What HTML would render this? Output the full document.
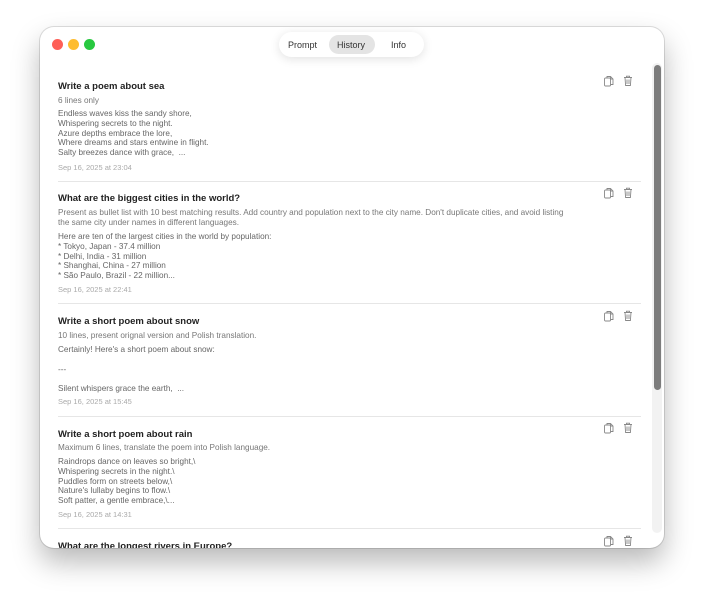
<!DOCTYPE html>
<html><head><style>
html,body{margin:0;padding:0;background:#fff;width:703px;height:600px;overflow:hidden;font-family:"Liberation Sans",sans-serif}
.win{position:absolute;left:40px;top:27px;width:624px;height:521px;background:#fff;border-radius:14px;box-shadow:0 14px 28px rgba(0,0,0,.28),0 0 0 1px rgba(0,0,0,.12);overflow:hidden}
.dot{position:absolute;top:12px;width:11px;height:11px;border-radius:50%}
.tabs{position:absolute;left:239px;top:5px;width:145px;height:25px;border-radius:13px;background:#fff;box-shadow:0 2px 10px rgba(0,0,0,.12);font-size:9px;color:#333}
.tabs span{position:absolute;top:8px}
.hl{position:absolute;left:50px;top:3px;width:46px;height:19px;border-radius:10px;background:#e4e4e4}
.t{position:absolute;left:18px;font-size:9.5px;font-weight:bold;color:#222;white-space:nowrap}
.p{position:absolute;left:18px;font-size:8.2px;color:#777;line-height:10px;white-space:nowrap}
.b{position:absolute;left:18px;font-size:8.2px;color:#666;line-height:9.8px;white-space:pre}
.d{position:absolute;left:18px;font-size:7.5px;color:#aaa}
.sep{position:absolute;left:18px;width:583px;height:1px;background:#e6e6e6}
.ic{position:absolute;left:563px}
.track{position:absolute;left:612px;top:36px;width:10px;height:470px;border-radius:5px;background:#f2f2f2}
.thumb{position:absolute;left:614px;top:38px;width:7px;height:325px;border-radius:4px;background:#7c7c7c}
</style></head><body>
<div class="win">
<div class="dot" style="left:12px;background:#fe5f57"></div>
<div class="dot" style="left:28px;background:#febc2e"></div>
<div class="dot" style="left:44px;background:#28c840"></div>
<div class="tabs"><div class="hl"></div><span style="left:9px">Prompt</span><span style="left:58px">History</span><span style="left:112px">Info</span></div>

<div class="track"></div><div class="thumb"></div>

<div class="t" style="top:54px">Write a poem about sea</div>
<div class="p" style="top:69px">6 lines only</div>
<div class="b" style="top:82px">Endless waves kiss the sandy shore,
Whispering secrets to the night.
Azure depths embrace the lore,
Where dreams and stars entwine in flight.
Salty breezes dance with grace,  ...</div>
<div class="d" style="top:136px">Sep 16, 2025 at 23:04</div>
<div class="sep" style="top:154px"></div>

<div class="t" style="top:166px">What are the biggest cities in the world?</div>
<div class="p" style="top:181px">Present as bullet list with 10 best matching results. Add country and population next to the city name. Don't duplicate cities, and avoid listing<br>the same city under names in different languages.</div>
<div class="b" style="top:205px">Here are ten of the largest cities in the world by population:
* Tokyo, Japan - 37.4 million
* Delhi, India - 31 million
* Shanghai, China - 27 million
* São Paulo, Brazil - 22 million...</div>
<div class="d" style="top:258px">Sep 16, 2025 at 22:41</div>
<div class="sep" style="top:276px"></div>

<div class="t" style="top:289px">Write a short poem about snow</div>
<div class="p" style="top:304px">10 lines, present orignal version and Polish translation.</div>
<div class="b" style="top:318px">Certainly! Here's a short poem about snow:

---

Silent whispers grace the earth,  ...</div>
<div class="d" style="top:370px">Sep 16, 2025 at 15:45</div>
<div class="sep" style="top:389px"></div>

<div class="t" style="top:402px">Write a short poem about rain</div>
<div class="p" style="top:416px">Maximum 6 lines, translate the poem into Polish language.</div>
<div class="b" style="top:430px">Raindrops dance on leaves so bright,\
Whispering secrets in the night.\
Puddles form on streets below,\
Nature's lullaby begins to flow.\
Soft patter, a gentle embrace,\...</div>
<div class="d" style="top:483px">Sep 16, 2025 at 14:31</div>
<div class="sep" style="top:501px"></div>

<div class="t" style="top:514px">What are the longest rivers in Europe?</div>

<svg width="0" height="0" style="position:absolute"><defs>
<g id="cp" fill="none" stroke="#888" stroke-width="0.9"><rect x="1.5" y="3" width="6" height="8" rx="1"/><path d="M4 3V1.5h3.5l2.5 2.5v5.5H7.5"/><path d="M7.5 1.5v2.5h2.5"/></g>
<g id="tr" fill="none" stroke="#888" stroke-width="0.9"><path d="M1 2.5h8M3.5 2.5V1.2h3v1.3M2 2.5l.6 8h4.8l.6-8M4 4.5v4.5M6 4.5v4.5"/></g>
</defs></svg>
<svg class="ic" style="top:48px" width="12" height="12"><use href="#cp"/></svg><svg class="ic" style="top:48px;left:583px" width="10" height="12"><use href="#tr"/></svg>
<svg class="ic" style="top:160px" width="12" height="12"><use href="#cp"/></svg><svg class="ic" style="top:160px;left:583px" width="10" height="12"><use href="#tr"/></svg>
<svg class="ic" style="top:283px" width="12" height="12"><use href="#cp"/></svg><svg class="ic" style="top:283px;left:583px" width="10" height="12"><use href="#tr"/></svg>
<svg class="ic" style="top:395px" width="12" height="12"><use href="#cp"/></svg><svg class="ic" style="top:395px;left:583px" width="10" height="12"><use href="#tr"/></svg>
<svg class="ic" style="top:508px" width="12" height="12"><use href="#cp"/></svg><svg class="ic" style="top:508px;left:583px" width="10" height="12"><use href="#tr"/></svg>
</div>
</body></html>
